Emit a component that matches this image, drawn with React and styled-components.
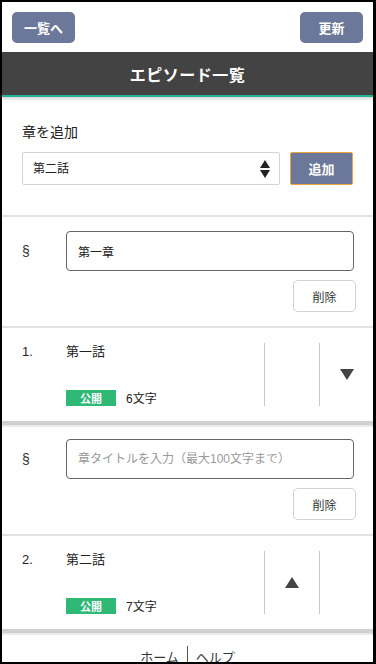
import React from "react";
import styled, { createGlobalStyle } from "styled-components";

const Global = createGlobalStyle`
  html, body { margin: 0; padding: 0; background: #fff; }
  body { font-family: "Liberation Sans", "Noto Sans CJK JP", sans-serif; color: #222; }
  * { box-sizing: border-box; }
`;

const Frame = styled.div`
  width: 376px;
  height: 664px;
  border-style: solid;
  border-color: #000;
  border-width: 2px 3px 2px 2px;
  overflow: hidden;
  background: #fff;
`;

const TopBar = styled.div`
  display: flex;
  justify-content: space-between;
  align-items: center;
  padding: 10px 10px 9px 10px;
`;

const NavButton = styled.button`
  width: 63px;
  height: 31px;
  border: none;
  border-radius: 5px;
  background: #6c7899;
  color: #fff;
  font-family: inherit;
  font-weight: 700;
  font-size: 13px;
  padding: 0;
  cursor: pointer;
`;

const Header = styled.header`
  height: 45px;
  background: #434343;
  border-bottom: 2px solid #1fb594;
  box-shadow: 0 2px 3px rgba(0, 0, 0, 0.18);
  display: flex;
  align-items: center;
  justify-content: center;
  color: #fff;
  font-weight: 700;
  font-size: 16px;
  letter-spacing: 0.5px;
`;

const AddSection = styled.section`
  padding: 25px 20px 30px 20px;
  border-bottom: 2px solid #e2e2e2;
`;

const Label = styled.div`
  font-size: 14px;
  line-height: 20px;
  color: #222;
  margin-bottom: 10px;
`;

const AddRow = styled.div`
  display: flex;
  align-items: center;
  gap: 10px;
`;

const SelectWrap = styled.div`
  position: relative;
  width: 258px;
  height: 33px;
`;

const Select = styled.select`
  appearance: none;
  -webkit-appearance: none;
  width: 100%;
  height: 100%;
  border: 1px solid #d4d4d4;
  border-radius: 2px;
  background: #fff;
  font-family: inherit;
  font-size: 12px;
  color: #222;
  padding: 0 10px;
  outline: none;
`;

const SelectArrows = styled.svg`
  position: absolute;
  right: 10px;
  top: 50%;
  transform: translateY(-50%);
  pointer-events: none;
`;

const AddButton = styled.button`
  width: 63px;
  height: 33px;
  border: 1px solid #eba53a;
  border-radius: 2px;
  background: #6c7899;
  color: #fff;
  font-family: inherit;
  font-weight: 700;
  font-size: 13px;
  padding: 0;
`;

const Chapter = styled.section`
  padding: 14px 17px 14px 20px;
  border-bottom: 2px solid #e2e2e2;
`;

const ChapterRow = styled.div`
  display: grid;
  grid-template-columns: 44px 1fr;
  align-items: center;
  padding-right: 2px;
`;

const Section = styled.span`
  font-size: 14px;
  color: #333;
`;

const TitleInput = styled.input`
  width: 100%;
  height: 40px;
  border: 1px solid #666;
  border-radius: 4px;
  padding: 0 11px;
  font-family: inherit;
  font-size: 12px;
  color: #222;
  outline: none;
  &::placeholder { color: #9a9a9a; }
`;

const ChapterActions = styled.div`
  display: flex;
  justify-content: flex-end;
  margin-top: 9px;
`;

const DeleteButton = styled.button`
  width: 63px;
  height: 32px;
  border: 1px solid #d2d2d2;
  border-radius: 5px;
  background: #fff;
  font-family: inherit;
  font-size: 12px;
  color: #333;
  padding: 0;
`;

const Episode = styled.section`
  display: flex;
  align-items: stretch;
  padding: 15px 0 15px 20px;
  border-bottom: 4px solid #d0d0d0;
  box-shadow: 0 2px 0 #ebebeb;
`;

const Num = styled.div`
  width: 44px;
  font-size: 13px;
  line-height: 18px;
  color: #222;
`;

const EpisodeBody = styled.div`
  flex: 1;
  display: flex;
  flex-direction: column;
  justify-content: space-between;
`;

const EpisodeTitle = styled.div`
  font-size: 13px;
  line-height: 18px;
  color: #222;
`;

const Meta = styled.div`
  display: flex;
  align-items: center;
  gap: 10px;
  font-size: 12px;
  color: #222;
`;

const Badge = styled.span`
  display: inline-flex;
  align-items: center;
  justify-content: center;
  width: 50px;
  height: 16px;
  background: #2fb876;
  color: #fff;
  font-size: 11px;
  font-weight: 700;
`;

const MoveCell = styled.div`
  width: ${(p) => p.$w}px;
  height: 63px;
  border-left: 1px solid #c8c8c8;
  display: flex;
  align-items: center;
  justify-content: center;
`;

const Footer = styled.footer`
  display: flex;
  justify-content: center;
  padding-top: 13px;
  font-size: 13px;
  color: #333;
`;

const FooterLink = styled.span`
  padding: 5px 8px 0;
  line-height: 14px;
  & + & { border-left: 1px solid #555; }
`;

const Tri = ({ up }) => (
  <svg width="14" height="11" viewBox="0 0 14 11">
    {up ? <polygon points="7,0 14,11 0,11" fill="#444" /> : <polygon points="0,0 14,0 7,11" fill="#444" />}
  </svg>
);

const ChapterBlock = ({ value, placeholder }) => (
  <Chapter>
    <ChapterRow>
      <Section>§</Section>
      <TitleInput defaultValue={value} placeholder={placeholder} />
    </ChapterRow>
    <ChapterActions>
      <DeleteButton>削除</DeleteButton>
    </ChapterActions>
  </Chapter>
);

const EpisodeRow = ({ n, title, count, up, down }) => (
  <Episode>
    <Num>{n}.</Num>
    <EpisodeBody>
      <EpisodeTitle>{title}</EpisodeTitle>
      <Meta>
        <Badge>公開</Badge>
        <span>{count}文字</span>
      </Meta>
    </EpisodeBody>
    <MoveCell $w={55}>{up && <Tri up />}</MoveCell>
    <MoveCell $w={54}>{down && <Tri />}</MoveCell>
  </Episode>
);

export default function App() {
  return (
    <>
      <Global />
      <Frame>
        <TopBar>
          <NavButton>一覧へ</NavButton>
          <NavButton>更新</NavButton>
        </TopBar>
        <Header>エピソード一覧</Header>
        <AddSection>
          <Label>章を追加</Label>
          <AddRow>
            <SelectWrap>
              <Select defaultValue="第二話">
                <option>第一話</option>
                <option>第二話</option>
              </Select>
              <SelectArrows width="10" height="20" viewBox="0 0 10 20">
                <polygon points="5,1 10,9 0,9" fill="#222" />
                <polygon points="0,11 10,11 5,19" fill="#222" />
              </SelectArrows>
            </SelectWrap>
            <AddButton>追加</AddButton>
          </AddRow>
        </AddSection>
        <ChapterBlock value="第一章" />
        <EpisodeRow n={1} title="第一話" count={6} down />
        <ChapterBlock placeholder="章タイトルを入力（最大100文字まで）" />
        <EpisodeRow n={2} title="第二話" count={7} up />
        <Footer>
          <FooterLink>ホーム</FooterLink>
          <FooterLink>ヘルプ</FooterLink>
        </Footer>
      </Frame>
    </>
  );
}
